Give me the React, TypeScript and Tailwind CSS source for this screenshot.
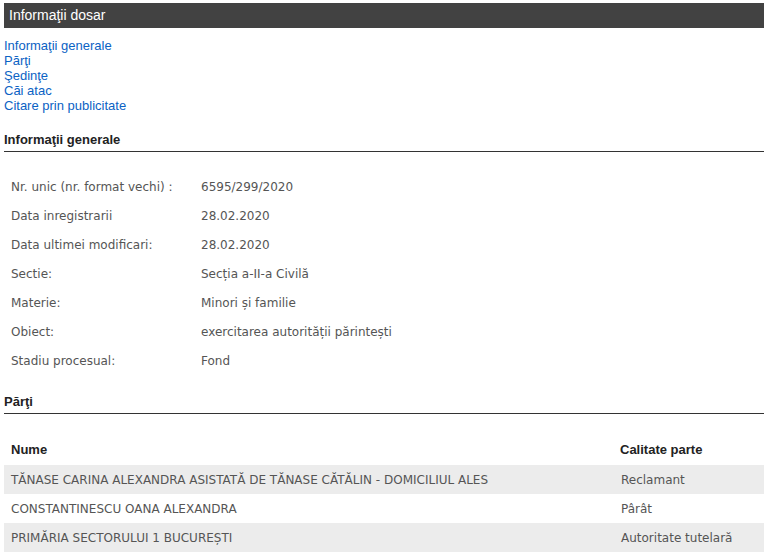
const links = [
  "Informaţii generale",
  "Părţi",
  "Şedinţe",
  "Căi atac",
  "Citare prin publicitate",
];

const info: [string, string][] = [
  ["Nr. unic (nr. format vechi) :", "6595/299/2020"],
  ["Data inregistrarii", "28.02.2020"],
  ["Data ultimei modificari:", "28.02.2020"],
  ["Sectie:", "Secția a-II-a Civilă"],
  ["Materie:", "Minori și familie"],
  ["Obiect:", "exercitarea autorității părintești"],
  ["Stadiu procesual:", "Fond"],
];

const parti: [string, string][] = [
  ["TĂNASE CARINA ALEXANDRA ASISTATĂ DE TĂNASE CĂTĂLIN - DOMICILIUL ALES", "Reclamant"],
  ["CONSTANTINESCU OANA ALEXANDRA", "Pârât"],
  ["PRIMĂRIA SECTORULUI 1 BUCUREȘTI", "Autoritate tutelară"],
];

const bodyFont = "font-['DejaVu_Sans','Liberation_Sans',sans-serif]";

function SectionTitle({ children }: { children: React.ReactNode }) {
  return (
    <div className="border-b border-[#333] pb-[3px] text-[13px] font-bold leading-[16px] text-[#222]">
      {children}
    </div>
  );
}

export default function App() {
  return (
    <div className="min-h-[558px] bg-white px-1 pt-[3px] font-['Liberation_Sans',Arial,sans-serif]">
      <div className="flex h-[25px] items-center bg-[#424242] px-[5px] text-[14px] text-white">
        Informaţii dosar
      </div>

      <div className="mt-[10px] flex flex-col text-[13px] leading-[15px] text-[#0b62c4]">
        {links.map((l) => (
          <a key={l} href="#" className="w-fit">
            {l}
          </a>
        ))}
      </div>

      <div className="mt-[19px]">
        <SectionTitle>Informaţii generale</SectionTitle>
      </div>

      <div className={`mt-[20px] flex flex-col text-[12px] text-[#555] ${bodyFont}`}>
        {info.map(([k, v]) => (
          <div key={k} className="flex h-[29px] items-center px-[7px]">
            <span className="w-[190px] shrink-0">{k}</span>
            <span>{v}</span>
          </div>
        ))}
      </div>

      <div className="mt-[19px]">
        <SectionTitle>Părţi</SectionTitle>
      </div>

      <div className="mt-[22px]">
        <div className="flex h-[29px] items-center px-[7px] pb-[2px] text-[13px] font-bold text-[#222]">
          <span className="w-[609px] shrink-0">Nume</span>
          <span>Calitate parte</span>
        </div>
        {parti.map(([n, c], i) => (
          <div
            key={n}
            className={`flex h-[29px] items-center px-[7px] text-[12px] text-[#555] ${bodyFont} ${
              i % 2 === 0 ? "bg-[#ececec]" : "bg-white"
            }`}
          >
            <span className="w-[610px] shrink-0">{n}</span>
            <span>{c}</span>
          </div>
        ))}
      </div>
    </div>
  );
}
